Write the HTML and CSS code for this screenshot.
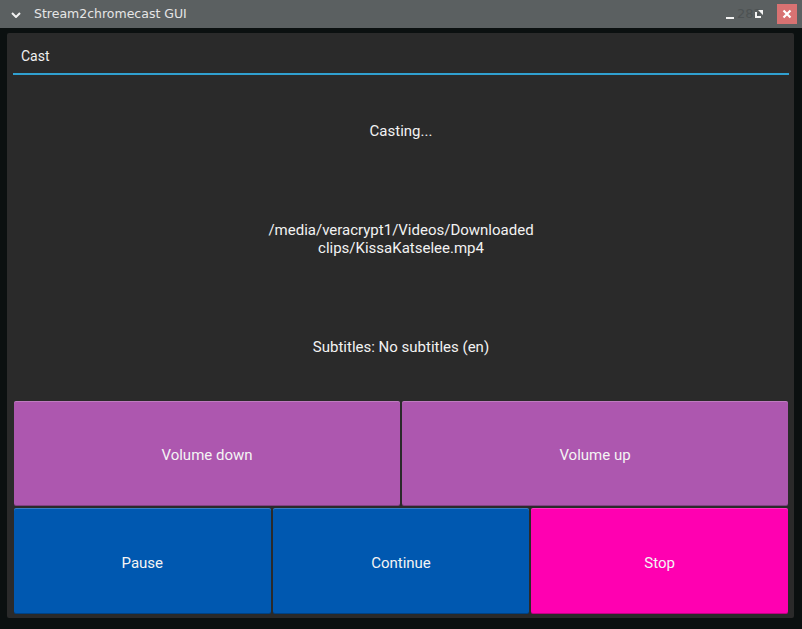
FILE: index.html
```html
<!DOCTYPE html>
<html>
<head>
<meta charset="utf-8">
<link rel="stylesheet" href="styles.css">
</head>
<body>
<div class="window">
  <div class="titlebar">
    <div class="menu-btn">
      <svg width="10" height="6" viewBox="0 0 10 6"><path d="M1 1 L5 5 L9 1" fill="none" stroke="#f2f2f2" stroke-width="2"/></svg>
    </div>
    <div class="title">Stream2chromecast GUI</div>
    <div class="controls">
      <span class="ghost">282</span>
      <span class="ctl min"><svg width="10" height="10" viewBox="0 0 10 10"><rect x="1" y="7" width="8" height="2" fill="#f4f4f4"/></svg></span>
      <span class="ctl restore"><svg width="10" height="10" viewBox="0 0 10 10"><path d="M1 3 H3 V7 H7 V9 H1 Z M4 1 H9 V6 Z" fill="#f4f4f4"/></svg></span>
      <span class="close"><svg width="10" height="10" viewBox="0 0 10 10"><path d="M1.5 1.5 L8.5 8.5 M8.5 1.5 L1.5 8.5" stroke="#fff" stroke-width="2.2"/></svg></span>
    </div>
  </div>
  <div class="frame">
    <div class="panel">
      <div class="tabbar"><span class="tab">Cast</span></div>
      <div class="content">
        <div class="info">
          <div class="line">Casting...</div>
          <div class="line">/media/veracrypt1/Videos/Downloaded<br>clips/KissaKatselee.mp4</div>
          <div class="line">Subtitles: No subtitles (en)</div>
        </div>
        <div class="row two">
          <button class="btn purple">Volume down</button>
          <button class="btn purple">Volume up</button>
        </div>
        <div class="row three">
          <button class="btn blue">Pause</button>
          <button class="btn blue">Continue</button>
          <button class="btn pink">Stop</button>
        </div>
      </div>
    </div>
  </div>
</div>
</body>
</html>
```
FILE: styles.css
```css
html, body {
  margin: 0;
  padding: 0;
  background: #0b1010;
  width: 802px;
  height: 629px;
  overflow: hidden;
}
.window {
  width: 802px;
  height: 629px;
  display: flex;
  flex-direction: column;
  font-family: Roboto, "Liberation Sans", sans-serif;
}
.titlebar {
  height: 28px;
  background: #5b6061;
  display: flex;
  align-items: center;
  flex: none;
}
.menu-btn {
  width: 28px;
  display: flex;
  justify-content: center;
  padding-left: 2px;
  padding-top: 1px;
}
.title {
  margin-left: 4px;
  color: #e6e6e6;
  font-family: "DejaVu Sans", sans-serif;
  font-size: 12.5px;
  padding-bottom: 1px;
}
.controls {
  margin-left: auto;
  display: flex;
  align-items: center;
  position: relative;
  height: 28px;
}
.ghost {
  position: absolute;
  left: 17px;
  top: 6px;
  font-family: "DejaVu Sans", sans-serif;
  font-size: 13px;
  color: #4d5253;
}
.ctl {
  width: 20px;
  display: flex;
  justify-content: center;
  position: relative;
}
.min { padding-top: 2px; margin-right: 9px; }
.close {
  width: 20px;
  height: 20px;
  background: #d87272;
  display: flex;
  align-items: center;
  justify-content: center;
  margin-left: 8px;
  margin-right: 5px;
}
.frame {
  flex: 1;
  padding: 5px 8px 11px 7px;
  background: #0b1010;
  display: flex;
}
.panel {
  flex: 1;
  background: #2a2a2a;
  border-radius: 2px;
  padding: 0 5px 4px 6px;
  display: flex;
  flex-direction: column;
}
.tabbar {
  height: 40px;
  border-bottom: 2px solid #30a0d0;
  display: flex;
  align-items: center;
  flex: none;
}
.tab {
  color: #f0f0f0;
  font-size: 14px;
  margin-left: 8px;
  padding-top: 5px;
}
.content {
  flex: 1;
  display: flex;
  flex-direction: column;
  padding: 0 1px 0 1px;
}
.info {
  height: 324px;
  padding-top: 2px;
  display: grid;
  grid-template-rows: 1fr 1fr 1fr;
  flex: none;
}
.line {
  display: flex;
  align-items: center;
  justify-content: center;
  text-align: center;
  color: #f2f2f2;
  font-size: 15px;
  line-height: 18px;
}
.row {
  display: grid;
  gap: 2px;
  flex: none;
}
.row.two {
  grid-template-columns: 1fr 1fr;
  height: 105px;
  margin-bottom: 2px;
}
.row.three {
  grid-template-columns: 1fr 1fr 1fr;
  height: 106px;
}
.btn {
  border: none;
  border-radius: 2px;
  font-family: Roboto, "Liberation Sans", sans-serif;
  font-size: 15px;
  color: #f4f4f4;
  padding: 3px 0 0 0;
  margin: 0;
  box-shadow: inset 0 1px 0 rgba(255,255,255,0.22), inset 0 -1px 0 rgba(0,0,0,0.25);
}
.purple { background: #ad57af; }
.blue { background: #0058b0; }
.pink { background: #ff00b1; }
```
